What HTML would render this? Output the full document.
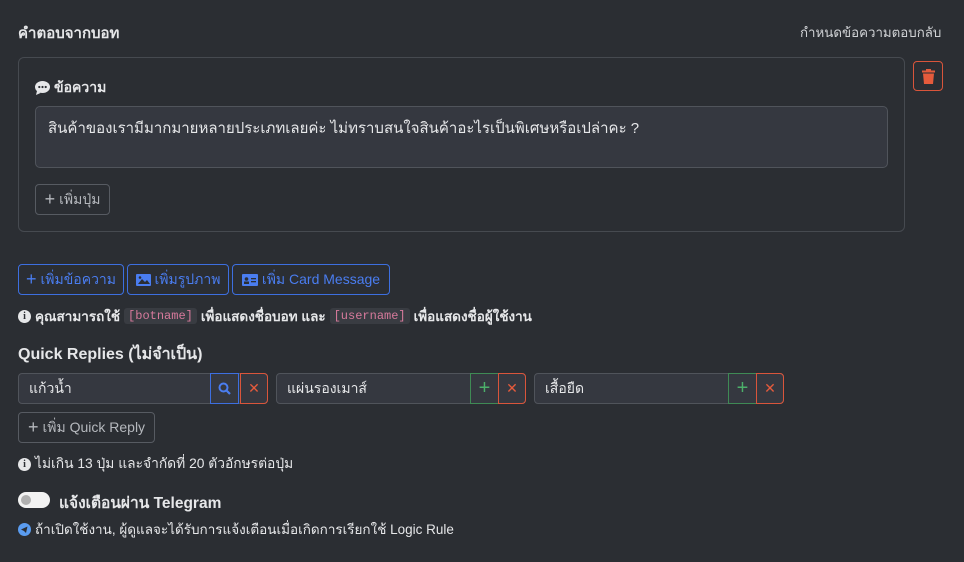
<!DOCTYPE html>
<html><head><meta charset="utf-8"><style>
*{box-sizing:border-box;margin:0;padding:0}
body{width:964px;height:562px;background:#2b2e33;color:#e6e7e9;font-family:"Liberation Sans","Noto Sans CJK SC",sans-serif;position:relative;overflow:hidden;font-size:14px}
.a{position:absolute}
.btn{position:absolute;border:1px solid #575b62;border-radius:4px;color:#b5b8bd;display:flex;align-items:center;justify-content:center;font-size:14px;gap:4px}
.blue{border-color:#3d6fe0;color:#4a7df0}
.code{background:#393c42;color:#d77a9c;font-family:"Liberation Mono",monospace;font-size:12px;font-weight:normal;padding:1px 4px;border-radius:3px}
.inp{position:absolute;height:31px;border:1px solid #50545b;border-radius:4px;background:#353840;display:flex;align-items:center;padding-left:10px;font-size:14px;color:#e6e7e9}
.sq{position:absolute;top:-1px;width:29px;height:31px;display:flex;align-items:center;justify-content:center;font-size:16px}
</style></head><body>
<div class="a" style="left:18px;top:21px;font-weight:bold;font-size:15px">คำตอบจากบอท</div>
<div class="a" style="left:800px;top:22px;font-size:13.3px;color:#d0d2d5">กำหนดข้อความตอบกลับ</div>
<div class="a" style="left:18px;top:57px;width:887px;height:175px;border:1px solid #464a50;border-radius:6px"></div>
<div class="a" style="left:913px;top:61px;width:30px;height:30px;border:1px solid #d9553b;border-radius:4px;display:flex;align-items:center;justify-content:center">
<svg width="13" height="15" viewBox="0 0 13 15"><rect x="0" y="1.5" width="13" height="2" fill="#e55b3c"/><rect x="4" y="0" width="5" height="2" fill="#e55b3c"/><path d="M1 4.5h11l-1 10.5H2z" fill="#e55b3c"/></svg></div>
<div class="a" style="left:35px;top:77px;font-weight:bold;font-size:14px;display:flex;align-items:center;gap:4px">
<svg width="15" height="14" viewBox="0 0 15 14"><ellipse cx="7.5" cy="6" rx="7.5" ry="6" fill="#e6e7e9"/><path d="M2 10l-1 4 4.5-2z" fill="#e6e7e9"/><circle cx="4.3" cy="6" r="1.1" fill="#2b2e33"/><circle cx="7.5" cy="6" r="1.1" fill="#2b2e33"/><circle cx="10.7" cy="6" r="1.1" fill="#2b2e33"/></svg>ข้อความ</div>
<div class="a" style="left:35px;top:106px;width:853px;height:62px;border:1px solid #50545b;border-radius:5px;background:#353840;padding:9px 12px;font-size:15px">สินค้าของเรามีมากมายหลายประเภทเลยค่ะ ไม่ทราบสนใจสินค้าอะไรเป็นพิเศษหรือเปล่าคะ ?</div>
<div class="btn" style="left:35px;top:184px;width:75px;height:31px"><span style="font-size:18px">+</span>เพิ่มปุ่ม</div>
<div class="btn blue" style="left:18px;top:264px;width:106px;height:31px"><span style="font-size:18px">+</span>เพิ่มข้อความ</div>
<div class="btn blue" style="left:127px;top:264px;width:102px;height:31px"><svg width="15" height="12"><rect width="15" height="12" rx="1" fill="#4a7df0"/><path d="M2 10l4-5 3 3 2-2 3 4z" fill="#2b2e33"/><circle cx="4" cy="3.5" r="1.3" fill="#2b2e33"/></svg>เพิ่มรูปภาพ</div>
<div class="btn blue" style="left:232px;top:264px;width:158px;height:31px"><svg width="16" height="12"><rect width="16" height="12" rx="1" fill="#4a7df0"/><circle cx="4.5" cy="5" r="1.8" fill="#2b2e33"/><rect x="2" y="7.5" width="5" height="2.5" fill="#2b2e33"/><rect x="9" y="4" width="5" height="1.3" fill="#2b2e33"/><rect x="9" y="7" width="5" height="1.3" fill="#2b2e33"/></svg>เพิ่ม Card Message</div>
<div class="a" style="left:18px;top:305px;font-size:13.5px;font-weight:bold;display:flex;align-items:center;gap:4px;white-space:nowrap">
<span style="width:13px;height:13px;border-radius:50%;background:#e6e7e9;color:#2b2e33;font-size:10px;display:inline-flex;align-items:center;justify-content:center;font-family:'Liberation Serif',serif">i</span>คุณสามารถใช้ <span class="code">[botname]</span> เพื่อแสดงชื่อบอท และ <span class="code">[username]</span> เพื่อแสดงชื่อผู้ใช้งาน</div>
<div class="a" style="left:18px;top:342px;font-weight:bold;font-size:16px">Quick Replies (ไม่จำเป็น)</div>
<div class="inp" style="left:18px;top:373px;width:250px">แก้วน้ำ
<div class="sq" style="left:191px;border:1px solid #3d6fe0"><svg width="13" height="13"><circle cx="5.5" cy="5.5" r="4" stroke="#4a7df0" stroke-width="2" fill="none"/><path d="M8.5 8.5l3.5 3.5" stroke="#4a7df0" stroke-width="2.2"/></svg></div>
<div class="sq" style="left:221px;width:28px;border:1px solid #d9553b;border-radius:0 4px 4px 0;color:#e55b3c;font-size:14px">✕</div></div>
<div class="inp" style="left:276px;top:373px;width:250px">แผ่นรองเมาส์
<div class="sq" style="left:193px;border:1px solid #3f8a55;color:#4caf6a;font-size:20px">+</div>
<div class="sq" style="left:221px;width:28px;border:1px solid #d9553b;border-radius:0 4px 4px 0;color:#e55b3c;font-size:14px">✕</div></div>
<div class="inp" style="left:534px;top:373px;width:250px">เสื้อยืด
<div class="sq" style="left:193px;border:1px solid #3f8a55;color:#4caf6a;font-size:20px">+</div>
<div class="sq" style="left:221px;width:28px;border:1px solid #d9553b;border-radius:0 4px 4px 0;color:#e55b3c;font-size:14px">✕</div></div>
<div class="btn" style="left:18px;top:412px;width:137px;height:31px"><span style="font-size:18px">+</span>เพิ่ม Quick Reply</div>
<div class="a" style="left:18px;top:453px;font-size:13.8px;display:flex;align-items:center;gap:4px"><span style="width:13px;height:13px;border-radius:50%;background:#e6e7e9;color:#2b2e33;font-size:10px;display:inline-flex;align-items:center;justify-content:center;font-family:'Liberation Serif',serif;font-weight:bold">i</span>ไม่เกิน 13 ปุ่ม และจำกัดที่ 20 ตัวอักษรต่อปุ่ม</div>
<div class="a" style="left:18px;top:492px;width:32px;height:16px;border-radius:8px;background:#f2f2f2"><div style="position:absolute;left:3px;top:3px;width:10px;height:10px;border-radius:50%;background:#b0b0b0"></div></div>
<div class="a" style="left:59px;top:490px;font-weight:bold;font-size:15.5px">แจ้งเตือนผ่าน Telegram</div>
<div class="a" style="left:18px;top:518px;font-size:13.5px;display:flex;align-items:center;gap:4px"><svg width="13" height="13"><circle cx="6.5" cy="6.5" r="6.5" fill="#5a9cf0"/><path d="M3 6.5l6.5-3-1.5 6.5-2-2z" fill="#2b2e33"/></svg>ถ้าเปิดใช้งาน, ผู้ดูแลจะได้รับการแจ้งเตือนเมื่อเกิดการเรียกใช้ Logic Rule</div>
</body></html>
